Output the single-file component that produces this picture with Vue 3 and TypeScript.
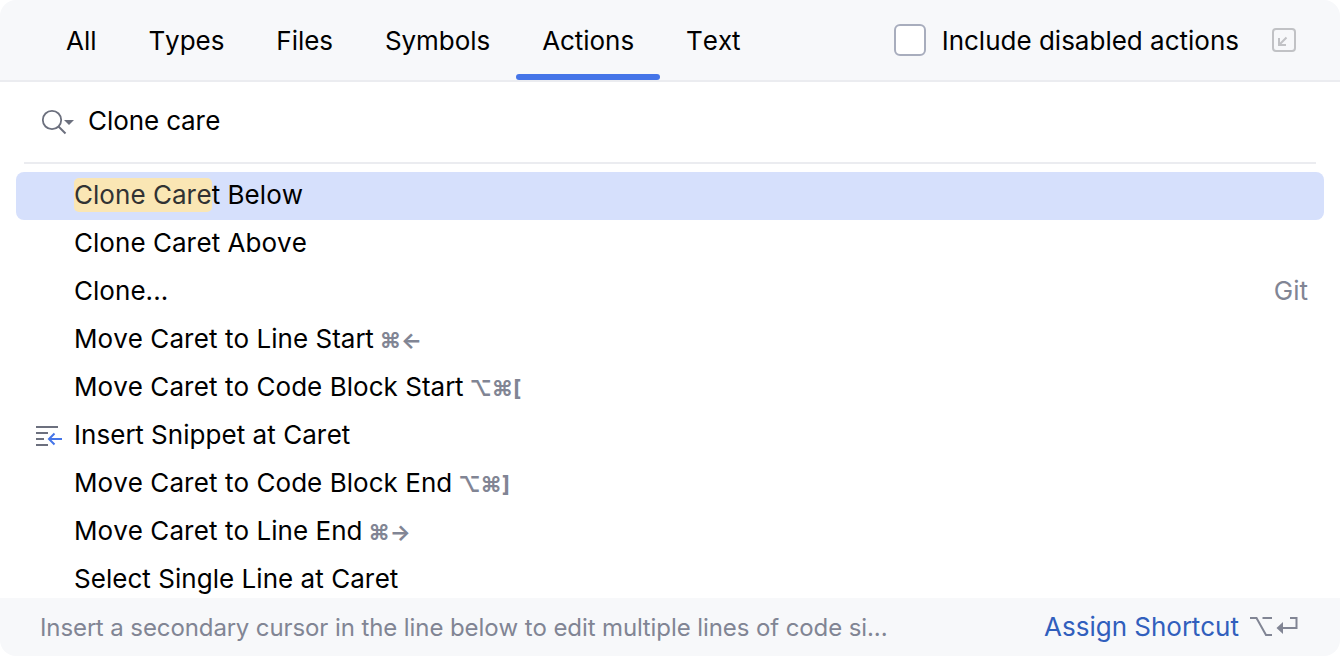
<script setup lang="ts">
import { computed, ref } from 'vue'

interface ActionItem {
  name: string
  shortcut?: string
  group?: string
  icon?: boolean
}

const tabs = ['All', 'Types', 'Files', 'Symbols', 'Actions', 'Text']

const activeTab = ref('Actions')

const query = ref('Clone care')

const includeDisabled = ref(false)

const selectedIndex = ref(0)

const actions: ActionItem[] = [
  { name: 'Clone Caret Below' },
  { name: 'Clone Caret Above' },
  { name: 'Clone...', group: 'Git' },
  { name: 'Move Caret to Line Start', shortcut: '⌘←' },
  { name: 'Move Caret to Code Block Start', shortcut: '⌥⌘[' },
  { name: 'Insert Snippet at Caret', icon: true },
  { name: 'Move Caret to Code Block End', shortcut: '⌥⌘]' },
  { name: 'Move Caret to Line End', shortcut: '⌘→' },
  { name: 'Select Single Line at Caret' },
]

// only the selected row highlights the matched prefix
const matchLength = computed(() => {
  const name = actions[selectedIndex.value].name.toLowerCase()
  return name.startsWith(query.value.toLowerCase()) ? query.value.length : 0
})

function matched(index: number) {
  return index === selectedIndex.value
    ? actions[index].name.slice(0, matchLength.value)
    : ''
}

function rest(index: number) {
  return actions[index].name.slice(matched(index).length)
}
</script>

<template>
  <div class="popup">
    <header class="header">
      <nav class="tabs">
        <button
          v-for="tab in tabs"
          :key="tab"
          class="tab"
          :class="{ active: tab === activeTab }"
          @click="activeTab = tab"
        >
          {{ tab }}
        </button>
      </nav>
      <label class="option">
        <input v-model="includeDisabled" class="checkbox" type="checkbox">
        <span class="option-label">Include disabled actions</span>
      </label>
      <svg class="open-icon" width="24" height="24" viewBox="0 0 24 24" fill="none">
        <rect x="1" y="1" width="22" height="22" rx="3" stroke="#c1c2c5" stroke-width="2" />
        <path d="M14.500 9.500L7.500 16.500M7 10v7h7" stroke="#c1c2c5" stroke-width="2" />
      </svg>
    </header>

    <div class="search">
      <svg class="search-icon" width="34" height="26" viewBox="0 0 34 26" fill="none">
        <circle cx="11" cy="11" r="9.2" stroke="#6c707e" stroke-width="1.8" />
        <path d="M17.5 17.5L24.5 24.5" stroke="#6c707e" stroke-width="2" />
        <path d="M23 11h10l-5 5z" fill="#6c707e" />
      </svg>
      <span class="query">{{ query }}</span>
    </div>

    <ul class="list">
      <li
        v-for="(item, index) in actions"
        :key="item.name"
        class="row"
        :class="{ selected: index === selectedIndex }"
        @click="selectedIndex = index"
      >
        <span class="row-icon">
          <svg v-if="item.icon" width="26" height="20" viewBox="0 0 26 20" fill="none">
            <path d="M0 1h22M0 7h12M0 13h8M0 19h12" stroke="#6c707e" stroke-width="1.8" />
            <path d="M26 13H13M18.500 7.500L13 13l5.500 5.500" stroke="#4575e8" stroke-width="2" />
          </svg>
        </span>
        <span class="name"><mark v-if="matched(index)" class="match">{{ matched(index) }}</mark>{{ rest(index) }}</span>
        <span v-if="item.shortcut" class="shortcut">{{ item.shortcut }}</span>
        <span v-if="item.group" class="group">{{ item.group }}</span>
      </li>
    </ul>

    <footer class="footer">
      <span class="hint">Insert a secondary cursor in the line below to edit multiple lines of code si...</span>
      <a class="assign">Assign Shortcut</a>
      <svg class="keys" width="48" height="20" viewBox="0 0 48 20" fill="none">
        <path d="M0 1h6.500l9.500 17H22M12.500 1H22" stroke="#818594" stroke-width="2" />
        <path d="M40 1h6.500v10H32" stroke="#818594" stroke-width="2" />
        <path d="M26.500 11l6.500-6v12z" fill="#818594" />
      </svg>
    </footer>
  </div>
</template>

<style scoped>
.popup {
  display: flex;
  flex-direction: column;
  width: 1340px;
  height: 656px;
  box-sizing: border-box;
  overflow: hidden;
  border-radius: 16px;
  background: #fff;
  color: #000;
  font-family: Inter, 'Noto Sans', sans-serif;
  font-size: 26px;
  font-kerning: none;
  line-height: 32px;
}

.header {
  display: flex;
  flex: none;
  align-items: center;
  height: 82px;
  padding: 0 44px 0 40px;
  box-sizing: border-box;
  border-bottom: 2px solid #ebecf0;
  background: #f7f8fa;
}

.tabs {
  display: flex;
  align-self: stretch;
  margin-right: auto;
}

.tab {
  display: grid;
  grid-template-rows: 1fr 6px;
  align-items: center;
  padding: 8px 26px 0;
  border: 0;
  background: none;
  color: inherit;
  font: inherit;
  font-kerning: none;
  letter-spacing: -0.05px;
}

.tab.active::after {
  height: 6px;
  margin: 0 -26px;
  border-radius: 3px;
  background: #4575e8;
  content: '';
}

.option {
  display: flex;
  align-items: center;
  gap: 16px;
}

.option-label {
  padding-top: 2px;
}

.checkbox {
  width: 32px;
  height: 32px;
  margin: 0;
  appearance: none;
  box-sizing: border-box;
  border: 2px solid #a8adbd;
  border-radius: 6px;
  background: #fff;
}

.open-icon {
  margin-left: 33px;
}

.search {
  display: flex;
  flex: none;
  align-items: center;
  height: 82px;
  margin: 0 24px;
  padding: 0 0 2px 17px;
  box-sizing: border-box;
  border-bottom: 2px solid #ebecf0;
}

.search-icon {
  margin-top: 2px;
}

.query {
  margin-left: 13px;
  letter-spacing: -0.08px;
}

.list {
  flex: 1;
  min-height: 0;
  margin: 0;
  padding: 8px 16px 0;
  overflow: hidden;
  list-style: none;
}

.row {
  display: flex;
  align-items: center;
  height: 48px;
  padding: 0 16px 2px 20px;
  box-sizing: border-box;
  border-radius: 8px;
}

.row.selected {
  background: #d6e0fc;
}

.row-icon {
  display: flex;
  width: 38px;
  padding-top: 2px;
}

.name {
  letter-spacing: 0.04px;
  white-space: pre;
}

.match {
  padding: 1px 0 2px;
  border-radius: 5px;
  background: #fae6b4;
  color: #313233;
}

.shortcut {
  margin-left: 6px;
  padding-top: 2px;
  color: #818594;
  font-size: 22px;
  font-weight: 700;
  letter-spacing: -0.2px;
}

.group {
  margin-left: auto;
  color: #818594;
}

.footer {
  display: flex;
  flex: none;
  align-items: center;
  height: 58px;
  padding: 0 42px 0 40px;
  background: #f7f8fa;
}

.hint {
  padding-top: 2px;
  color: #818594;
  font-size: 24px;
  letter-spacing: -0.09px;
}

.assign {
  margin-left: auto;
  color: #315fbd;
}

.keys {
  margin-left: 11px;
}
</style>

<style>
body {
  background: #fff;
}
</style>
